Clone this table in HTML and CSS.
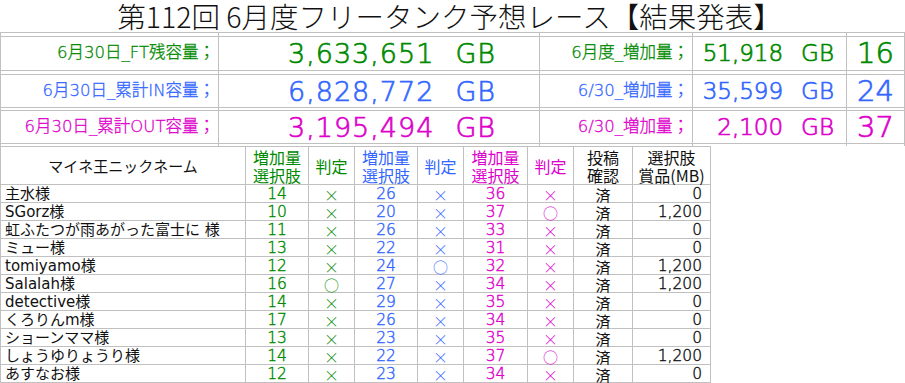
FILE: index.html
```html
<!DOCTYPE html>
<html lang="ja">
<head>
<meta charset="utf-8">
<title>第112回 6月度フリータンク予想レース【結果発表】</title>
<link rel="stylesheet" href="styles.css">
</head>
<body>
<div class="sheet">
  <div class="title"><span>第112回 6月度フリータンク予想レース【結果発表】</span></div>

  <div class="summary">
    <div class="cell gap"></div><div class="cell gap"></div><div class="cell gap"></div><div class="cell gap"></div><div class="cell gap"></div>

    <div class="cell label green">6月30日_FT残容量；</div>
    <div class="cell big green"><span class="num">3,633,651</span><span class="unit">GB</span></div>
    <div class="cell label green">6月度_増加量；</div>
    <div class="cell mid green"><span class="num">51,918</span><span class="unit">GB</span></div>
    <div class="cell count green">16</div>

    <div class="cell gap"></div><div class="cell gap"></div><div class="cell gap"></div><div class="cell gap"></div><div class="cell gap"></div>

    <div class="cell label blue">6月30日_累計IN容量；</div>
    <div class="cell big blue"><span class="num">6,828,772</span><span class="unit">GB</span></div>
    <div class="cell label blue">6/30_増加量；</div>
    <div class="cell mid blue"><span class="num">35,599</span><span class="unit">GB</span></div>
    <div class="cell count blue">24</div>

    <div class="cell gap"></div><div class="cell gap"></div><div class="cell gap"></div><div class="cell gap"></div><div class="cell gap"></div>

    <div class="cell label pink">6月30日_累計OUT容量；</div>
    <div class="cell big pink"><span class="num">3,195,494</span><span class="unit">GB</span></div>
    <div class="cell label pink">6/30_増加量；</div>
    <div class="cell mid pink"><span class="num">2,100</span><span class="unit">GB</span></div>
    <div class="cell count pink">37</div>

    <div class="cell gap last"></div><div class="cell gap last"></div><div class="cell gap last"></div><div class="cell gap last"></div><div class="cell gap last"></div>
  </div>

  <div class="results">
    <div class="h name-h">マイネ王ニックネーム</div>
    <div class="h green">増加量<br>選択肢</div>
    <div class="h green">判定</div>
    <div class="h blue">増加量<br>選択肢</div>
    <div class="h blue">判定</div>
    <div class="h pink">増加量<br>選択肢</div>
    <div class="h pink">判定</div>
    <div class="h">投稿<br>確認</div>
    <div class="h">選択肢<br>賞品(MB)</div>

    <div class="d name">主水様</div><div class="d n green">14</div><div class="d m green">×</div><div class="d n blue">26</div><div class="d m blue">×</div><div class="d n pink">36</div><div class="d m pink">×</div><div class="d c">済</div><div class="d r">0</div>
    <div class="d name">SGorz様</div><div class="d n green">10</div><div class="d m green">×</div><div class="d n blue">20</div><div class="d m blue">×</div><div class="d n pink">37</div><div class="d m pink">○</div><div class="d c">済</div><div class="d r">1,200</div>
    <div class="d name">虹ふたつが雨あがった富士に 様</div><div class="d n green">11</div><div class="d m green">×</div><div class="d n blue">26</div><div class="d m blue">×</div><div class="d n pink">33</div><div class="d m pink">×</div><div class="d c">済</div><div class="d r">0</div>
    <div class="d name">ミュー様</div><div class="d n green">13</div><div class="d m green">×</div><div class="d n blue">22</div><div class="d m blue">×</div><div class="d n pink">31</div><div class="d m pink">×</div><div class="d c">済</div><div class="d r">0</div>
    <div class="d name">tomiyamo様</div><div class="d n green">12</div><div class="d m green">×</div><div class="d n blue">24</div><div class="d m blue">○</div><div class="d n pink">32</div><div class="d m pink">×</div><div class="d c">済</div><div class="d r">1,200</div>
    <div class="d name">Salalah様</div><div class="d n green">16</div><div class="d m green">○</div><div class="d n blue">27</div><div class="d m blue">×</div><div class="d n pink">34</div><div class="d m pink">×</div><div class="d c">済</div><div class="d r">1,200</div>
    <div class="d name">detective様</div><div class="d n green">14</div><div class="d m green">×</div><div class="d n blue">29</div><div class="d m blue">×</div><div class="d n pink">35</div><div class="d m pink">×</div><div class="d c">済</div><div class="d r">0</div>
    <div class="d name">くろりんm様</div><div class="d n green">17</div><div class="d m green">×</div><div class="d n blue">26</div><div class="d m blue">×</div><div class="d n pink">34</div><div class="d m pink">×</div><div class="d c">済</div><div class="d r">0</div>
    <div class="d name">ショーンママ様</div><div class="d n green">13</div><div class="d m green">×</div><div class="d n blue">23</div><div class="d m blue">×</div><div class="d n pink">35</div><div class="d m pink">×</div><div class="d c">済</div><div class="d r">0</div>
    <div class="d name">しょうゆりょうり様</div><div class="d n green">14</div><div class="d m green">×</div><div class="d n blue">22</div><div class="d m blue">×</div><div class="d n pink">37</div><div class="d m pink">○</div><div class="d c">済</div><div class="d r">1,200</div>
    <div class="d name">あすなお様</div><div class="d n green">12</div><div class="d m green">×</div><div class="d n blue">23</div><div class="d m blue">×</div><div class="d n pink">34</div><div class="d m pink">×</div><div class="d c">済</div><div class="d r">0</div>
  </div>
</div>
</body>
</html>
```

FILE: styles.css
```css
* { box-sizing: border-box; }

html, body {
  margin: 0;
  padding: 0;
  background: #ffffff;
}

body {
  width: 905px;
  height: 383px;
  overflow: hidden;
  font-family: "DejaVu Sans", "Noto Sans CJK JP", sans-serif;
  font-weight: 400;
  color: #111111;
}

.green { color: #008a00; }
.blue { color: #3366ff; }
.pink { color: #dd00cc; }

.title {
  height: 33px;
  border-bottom: 1px solid #c0c0c0;
  display: flex;
  align-items: center;
  justify-content: center;
  padding-right: 6px;
  font-family: "Noto Sans CJK JP", sans-serif;
  font-weight: 300;
  font-size: 28.5px;
  line-height: 1;
  color: #111111;
}

.summary {
  display: grid;
  grid-template-columns: 218px 321px 153px 154px 58px;
  grid-template-rows: 4px 34px 4px 33px 3px 33px 2px;
  border-left: 1px solid #c0c0c0;
  width: 905px;
}

.cell {
  border-right: 1px solid #c0c0c0;
  border-bottom: 1px solid #c0c0c0;
  display: flex;
  align-items: center;
  white-space: nowrap;
  line-height: 1;
}

.cell.last { border-bottom: none; }

.label {
  justify-content: flex-end;
  padding-right: 3px;
  font-size: 16.5px;
  font-weight: 300;
  -webkit-text-stroke: 0.3px currentColor;
}

.big, .mid, .count {
  font-weight: 300;
  -webkit-text-stroke: 0.7px currentColor;
}

.big {
  justify-content: flex-end;
  padding-right: 43px;
  gap: 21px;
  font-size: 27px;
  letter-spacing: 1px;
}

.mid {
  justify-content: flex-end;
  padding-right: 12px;
  gap: 18px;
  font-size: 23px;
}

.count {
  justify-content: center;
  font-size: 29px;
}

.results {
  display: grid;
  grid-template-columns: 245px 63px 46px 63px 46px 64px 46px 59px 78px;
  grid-template-rows: 38px repeat(11, 18px);
  width: 711px;
  border-left: 1px solid #c0c0c0;
  border-top: 1px solid #c0c0c0;
}

.h, .d {
  border-right: 1px solid #c0c0c0;
  border-bottom: 1px solid #c0c0c0;
  display: flex;
  align-items: center;
  white-space: nowrap;
}

.h {
  justify-content: center;
  text-align: center;
  font-family: "Noto Sans CJK JP", sans-serif;
  font-size: 16px;
  line-height: 18px;
  padding-top: 1px;
}

.h.name-h { font-size: 15px; }

.d {
  font-size: 15px;
  line-height: 15px;
  padding-top: 2px;
}

.d.name { padding-left: 4px; }

.d.n {
  justify-content: center;
  font-size: 15.5px;
  font-weight: 300;
  -webkit-text-stroke: 0.4px currentColor;
}

.d.m {
  justify-content: center;
  font-family: "Noto Sans CJK JP", sans-serif;
  font-weight: 300;
  font-size: 15px;
}

.d.c {
  justify-content: center;
  font-family: "Noto Sans CJK JP", sans-serif;
}

.d.r {
  justify-content: flex-end;
  padding-right: 8px;
  font-size: 15.5px;
  font-weight: 300;
  -webkit-text-stroke: 0.4px currentColor;
}
```
